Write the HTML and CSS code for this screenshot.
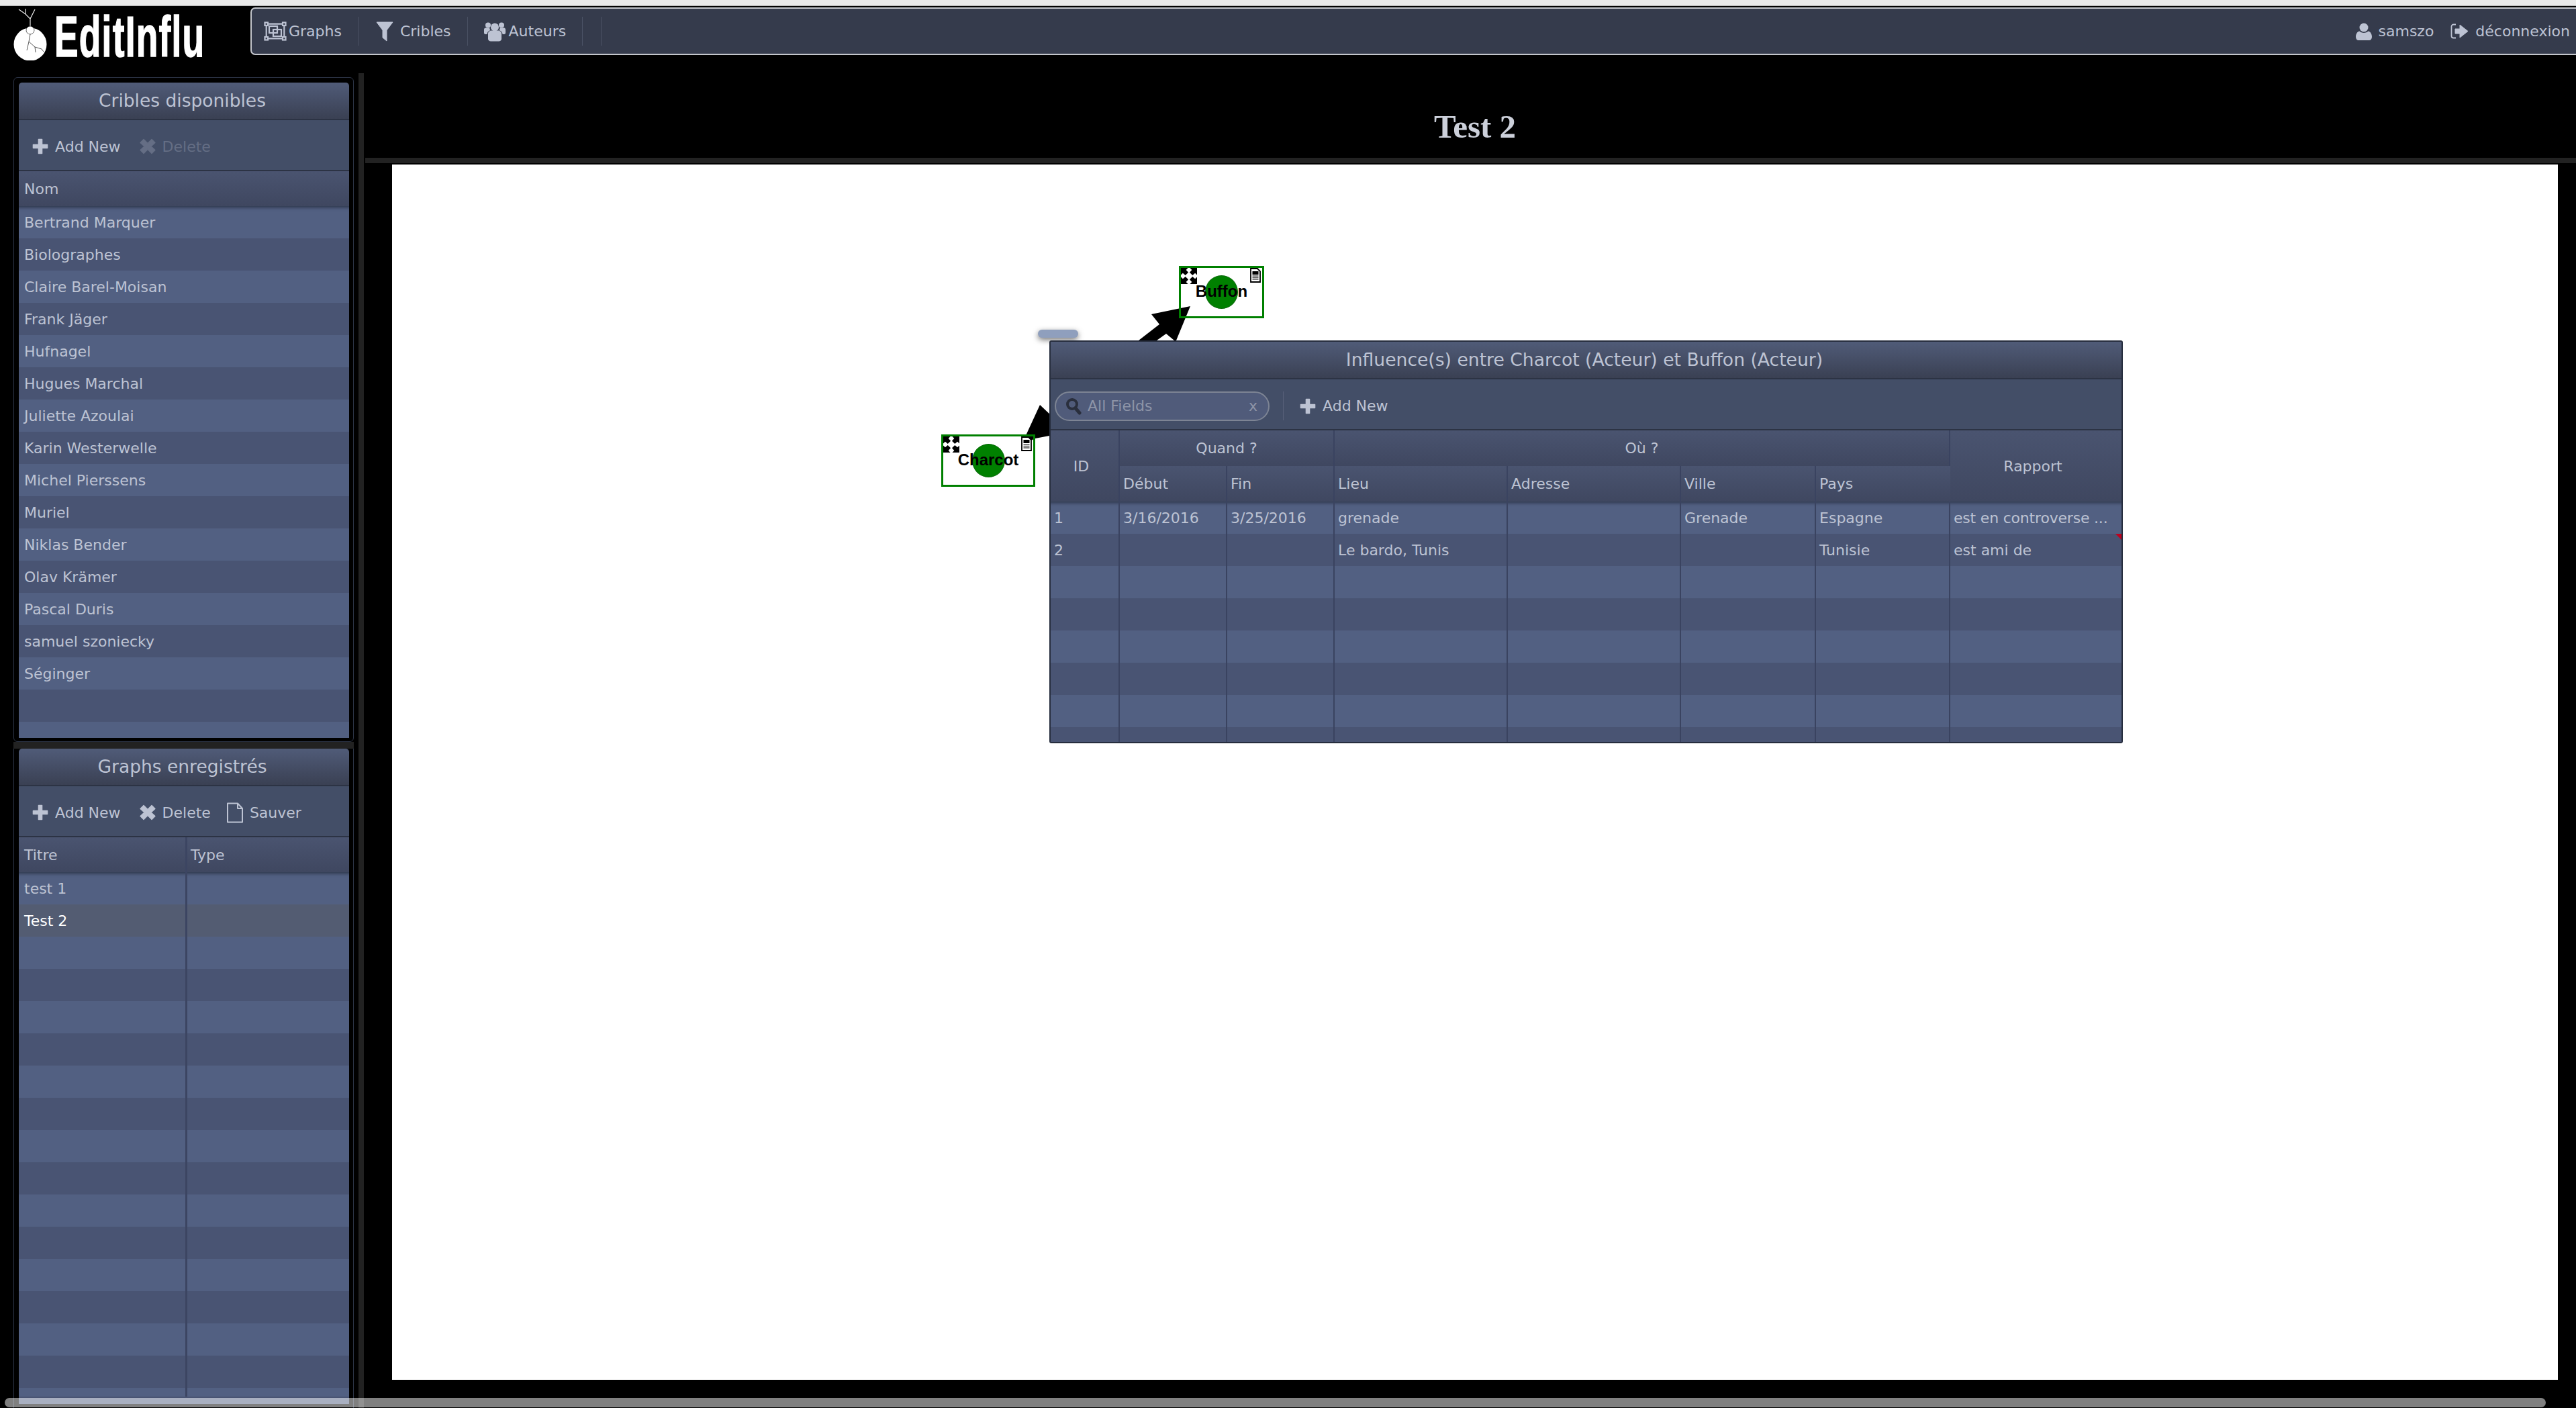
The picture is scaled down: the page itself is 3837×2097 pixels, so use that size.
FILE: index.html
```html
<!DOCTYPE html>
<html lang="fr">
<head>
<meta charset="utf-8">
<title>EditInflu</title>
<link rel="stylesheet" href="styles.css">
</head>
<body>
<svg class="sprite" width="0" height="0" aria-hidden="true">
  <symbol id="i-plus" viewBox="0 0 24 24"><path d="M9.500 1.500h5v8h8v5h-8v8h-5v-8h-8v-5h8z" fill="currentColor" stroke="currentColor" stroke-width="1.600" stroke-linejoin="round"/></symbol>
  <symbol id="i-times" viewBox="0 0 24 24"><path d="M6 1.500l6 6 6-6 5 5-6 5.500 6 5.500-5 5-6-6-6 6-5-5 6-5.500-6-5.500z" fill="currentColor" stroke="currentColor" stroke-width="1.200" stroke-linejoin="round"/></symbol>
  <symbol id="i-file" viewBox="0 0 26 31"><path d="M2 1.500h15l7 7.500v20.500H2zM17 1.500V9h7" fill="none" stroke="currentColor" stroke-width="2" stroke-linejoin="round"/></symbol>
  <symbol id="i-graphs" viewBox="0 0 36 31"><g fill="none" stroke="currentColor" stroke-width="2.200"><rect x="2.500" y="2.500" width="4.500" height="4.500"/><rect x="29" y="2.500" width="4.500" height="4.500"/><rect x="2.500" y="24" width="4.500" height="4.500"/><rect x="29" y="24" width="4.500" height="4.500"/><path d="M7 4.700h22M7 26.300h22M4.700 7v17M31.300 7v17"/><rect x="9" y="8" width="12" height="10"/><rect x="15" y="13" width="12" height="10"/></g></symbol>
  <symbol id="i-filter" viewBox="0 0 26 30"><path d="M1 1h24L16 13v16l-6-5V13z" fill="currentColor" stroke="currentColor" stroke-linejoin="round"/></symbol>
  <symbol id="i-users" viewBox="0 0 32 30"><g fill="currentColor"><circle cx="16" cy="8.500" r="6"/><circle cx="6" cy="5.500" r="4"/><circle cx="26" cy="5.500" r="4"/><path d="M6 18c0-3 3-4.500 5-4.500h10c2 0 5 1.500 5 4.500v8c0 2-2 3.500-4 3.500H10c-2 0-4-1.500-4-3.500z"/><path d="M0 12c0-2 1.500-2.500 3-2.500h5c.5 1.500 1 3 1.500 3.500C6.500 14 4.500 16 4.500 19H2c-1 0-2-.7-2-2zM32 12c0-2-1.500-2.500-3-2.500h-5c-.5 1.500-1 3-1.500 3.500 3 1 5 3 5 6H30c1 0 2-.7 2-2z"/></g></symbol>
  <symbol id="i-user" viewBox="0 0 24 26"><g fill="currentColor"><circle cx="12" cy="7" r="6.500"/><path d="M0 21c0-4 2-8 5.500-8.500 1.500 1.500 4 2.500 6.500 2.500s5-1 6.500-2.500C22 13 24 17 24 21c0 3-2 5-4 5H4c-2 0-4-2-4-5z"/></g></symbol>
  <symbol id="i-logout" viewBox="0 0 27 23"><path d="M8 1.500H4.500a3 3 0 0 0-3 3v14a3 3 0 0 0 3 3H8" fill="none" stroke="currentColor" stroke-width="1.800"/><path d="M7 8h7V2l12 9.500L14 21v-6H7z" fill="currentColor" stroke="currentColor" stroke-linejoin="round"/></symbol>
  <symbol id="i-search" viewBox="0 0 24 26"><circle cx="10" cy="10" r="7" fill="none" stroke="currentColor" stroke-width="4"/><path d="M15 16l6 7" stroke="currentColor" stroke-width="5" stroke-linecap="round"/></symbol>
  <symbol id="i-move" viewBox="0 0 25 25"><path d="M0 0h11L8 3l3.500 4L7 11.500 3 8l-3 3zM25 0H14l3 3-3.500 4L18 11.500 22 8l3 3zM0 25h11l-3-3 3.500-4L7 13.500 3 17l-3-3zM25 25H14l3-3-3.500-4 4.500-4.500 4 3.500 3-3z" fill="#000"/></symbol>
  <symbol id="i-doc" viewBox="0 0 16 22"><path d="M1 1h10l4 4v16H1z" fill="#fff" stroke="#000" stroke-width="1.800"/><rect x="3.500" y="5" width="9" height="5" fill="#000"/><path d="M3.500 12h9M3.500 14.500h9M3.500 17h9" stroke="#555" stroke-width="1.500"/></symbol>
</svg>

<div class="strip"></div>

<header class="head">
  <a class="logo" href="#">
    <svg class="logo-mark" viewBox="0 0 60 77" width="60" height="77">
      <path d="M25 27V15l7-14M25 15L18 8 8 1M18 8V0" fill="none" stroke="#e8e8e8" stroke-width="1.200"/>
      <circle cx="25" cy="53" r="24.500" fill="#fff"/>
      <circle cx="25" cy="32" r="6" fill="#fff" stroke="#000" stroke-width=".6"/>
      <path d="M25 38l-2 11-3 13M23 49l9 8 1 8M32 57l10 3 3 4" fill="none" stroke="#555" stroke-width="1"/>
    </svg>
    <span class="logo-text">EditInflu</span>
  </a>
  <nav class="menubar">
    <a class="menu-item"><svg class="ic-graphs"><use href="#i-graphs"/></svg>Graphs</a>
    <span class="menu-sep"></span>
    <a class="menu-item"><svg class="ic-filter"><use href="#i-filter"/></svg>Cribles</a>
    <span class="menu-sep"></span>
    <a class="menu-item"><svg class="ic-users"><use href="#i-users"/></svg>Auteurs</a>
    <span class="menu-sep"></span>
    <span class="menu-sep menu-sep-b"></span>
    <div class="menu-right">
      <a class="menu-item"><svg class="ic-user"><use href="#i-user"/></svg>samszo</a>
      <a class="menu-item"><svg class="ic-logout"><use href="#i-logout"/></svg>déconnexion</a>
    </div>
  </nav>
</header>

<main class="main">
  <aside class="sidebar">
    <section class="well well-top">
      <div class="panel">
        <h2 class="panel-title">Cribles disponibles</h2>
        <div class="tools">
          <a class="tool"><svg class="ic-btn"><use href="#i-plus"/></svg>Add New</a>
          <a class="tool tool-off"><svg class="ic-btn"><use href="#i-times"/></svg>Delete</a>
        </div>
        <div class="col-head"><span class="cell">Nom</span></div>
        <div class="rows">
          <div class="row"><span class="cell">Bertrand Marquer</span></div>
          <div class="row"><span class="cell">Biolographes</span></div>
          <div class="row"><span class="cell">Claire Barel-Moisan</span></div>
          <div class="row"><span class="cell">Frank Jäger</span></div>
          <div class="row"><span class="cell">Hufnagel</span></div>
          <div class="row"><span class="cell">Hugues Marchal</span></div>
          <div class="row"><span class="cell">Juliette Azoulai</span></div>
          <div class="row"><span class="cell">Karin Westerwelle</span></div>
          <div class="row"><span class="cell">Michel Pierssens</span></div>
          <div class="row"><span class="cell">Muriel</span></div>
          <div class="row"><span class="cell">Niklas Bender</span></div>
          <div class="row"><span class="cell">Olav Krämer</span></div>
          <div class="row"><span class="cell">Pascal Duris</span></div>
          <div class="row"><span class="cell">samuel szoniecky</span></div>
          <div class="row"><span class="cell">Séginger</span></div>
          <div class="row"><span class="cell"></span></div>
          <div class="row"><span class="cell"></span></div>
        </div>
      </div>
    </section>
    <div class="hsplit"></div>
    <section class="well well-bottom">
      <div class="panel">
        <h2 class="panel-title">Graphs enregistrés</h2>
        <div class="tools">
          <a class="tool"><svg class="ic-btn"><use href="#i-plus"/></svg>Add New</a>
          <a class="tool"><svg class="ic-btn"><use href="#i-times"/></svg>Delete</a>
          <a class="tool tool-file"><svg class="ic-file"><use href="#i-file"/></svg>Sauver</a>
        </div>
        <div class="col-head two"><span class="cell">Titre</span><span class="cell">Type</span></div>
        <div class="rows">
          <div class="row two"><span class="cell">test 1</span><span class="cell"></span></div>
          <div class="row two selected"><span class="cell">Test 2</span><span class="cell"></span></div>
          <div class="row two"><span class="cell"></span><span class="cell"></span></div>
          <div class="row two"><span class="cell"></span><span class="cell"></span></div>
          <div class="row two"><span class="cell"></span><span class="cell"></span></div>
          <div class="row two"><span class="cell"></span><span class="cell"></span></div>
          <div class="row two"><span class="cell"></span><span class="cell"></span></div>
          <div class="row two"><span class="cell"></span><span class="cell"></span></div>
          <div class="row two"><span class="cell"></span><span class="cell"></span></div>
          <div class="row two"><span class="cell"></span><span class="cell"></span></div>
          <div class="row two"><span class="cell"></span><span class="cell"></span></div>
          <div class="row two"><span class="cell"></span><span class="cell"></span></div>
          <div class="row two"><span class="cell"></span><span class="cell"></span></div>
          <div class="row two"><span class="cell"></span><span class="cell"></span></div>
          <div class="row two"><span class="cell"></span><span class="cell"></span></div>
          <div class="row two"><span class="cell"></span><span class="cell"></span></div>
          <div class="row two"><span class="cell"></span><span class="cell"></span></div>
        </div>
        <div class="panel-foot"></div>
      </div>
    </section>
  </aside>

  <div class="vsplit"></div>

  <section class="content">
    <h1 class="page-title">Test 2</h1>
    <div class="content-rule"></div>
    <div class="canvas">
      <svg class="links" viewBox="0 0 3226 1810" width="3226" height="1810">
        <polygon points="1189,211 1131,223 1143,238 1112,262 1112,270 1139,270 1139,262 1153,252 1165,262 1168,262"/>
        <polygon points="965,358 1020,410 979,404 958,408 941,416 941,410"/>
      </svg>
      <div class="node node-buffon">
        <svg class="node-move"><use href="#i-move"/></svg>
        <svg class="node-doc"><use href="#i-doc"/></svg>
        <span class="node-dot"></span>
        <span class="node-label">Buffon</span>
      </div>
      <div class="node node-charcot">
        <svg class="node-move"><use href="#i-move"/></svg>
        <svg class="node-doc"><use href="#i-doc"/></svg>
        <span class="node-dot"></span>
        <span class="node-label">Charcot</span>
      </div>
      <div class="grabber"></div>
      <div class="dialog">
        <h2 class="panel-title dialog-title">Influence(s) entre Charcot (Acteur) et Buffon (Acteur)</h2>
        <div class="tools tools-dialog">
          <div class="search">
            <svg class="ic-search"><use href="#i-search"/></svg>
            <span class="search-text">All Fields</span>
            <span class="search-x">x</span>
          </div>
          <span class="tool-sep"></span>
          <a class="tool"><svg class="ic-btn"><use href="#i-plus"/></svg>Add New</a>
        </div>
        <table class="grid">
          <colgroup>
            <col class="c-id"><col class="c-date"><col class="c-date"><col class="c-wide"><col class="c-wide"><col class="c-city"><col class="c-city-b"><col>
          </colgroup>
          <thead>
            <tr>
              <th rowspan="2" class="center tall">ID</th>
              <th colspan="2" class="center">Quand ?</th>
              <th colspan="4" class="center">Où ?</th>
              <th rowspan="2" class="center tall">Rapport</th>
            </tr>
            <tr>
              <th>Début</th><th>Fin</th><th>Lieu</th><th>Adresse</th><th>Ville</th><th>Pays</th>
            </tr>
          </thead>
          <tbody>
            <tr><td>1</td><td>3/16/2016</td><td>3/25/2016</td><td>grenade</td><td></td><td>Grenade</td><td>Espagne</td><td class="tight">est en controverse ...</td></tr>
            <tr><td>2</td><td></td><td></td><td>Le bardo, Tunis</td><td></td><td></td><td>Tunisie</td><td class="dirty">est ami de</td></tr>
            <tr><td></td><td></td><td></td><td></td><td></td><td></td><td></td><td></td></tr>
            <tr><td></td><td></td><td></td><td></td><td></td><td></td><td></td><td></td></tr>
            <tr><td></td><td></td><td></td><td></td><td></td><td></td><td></td><td></td></tr>
            <tr><td></td><td></td><td></td><td></td><td></td><td></td><td></td><td></td></tr>
            <tr><td></td><td></td><td></td><td></td><td></td><td></td><td></td><td></td></tr>
            <tr><td></td><td></td><td></td><td></td><td></td><td></td><td></td><td></td></tr>
          </tbody>
        </table>
      </div>
    </div>
  </section>
</main>

<div class="page-scroll"></div>
</body>
</html>
```

FILE: styles.css
```css
* { box-sizing: border-box; }

html, body {
  margin: 0;
  height: 2097px;
  overflow: hidden;
  background: #000;
}

body {
  position: relative;
  color: #bdc3d3;
  font-family: "DejaVu Sans", Verdana, sans-serif;
  font-size: 22px;
}

.sprite { position: absolute; }

.strip {
  height: 9px;
  background: #e9e9e9;
  border-bottom: 1px solid #b5b5b5;
}

/* header */
.head {
  display: flex;
  height: 100px;
}

.logo {
  display: flex;
  width: 373px;
  height: 73px;
  padding: 4px 0 0 20px;
  color: #fff;
  text-decoration: none;
}

.logo-mark { flex: none; }

.logo-text {
  margin: 0 0 0 1px;
  font-family: "Liberation Sans", Arial, sans-serif;
  font-size: 86px;
  line-height: 82px;
  font-weight: 700;
  letter-spacing: 2px;
  -webkit-text-stroke: 1.500px #fff;
  transform: scaleX(.62);
  transform-origin: left center;
  white-space: nowrap;
}

.menubar {
  flex: 1;
  display: flex;
  align-items: center;
  height: 71px;
  margin-top: 2px;
  padding-left: 17px;
  background: #353b4c;
  border: 2px solid #c4c6cc;
  border-right: 0;
  border-radius: 7px 0 0 7px;
}

.menu-item {
  display: flex;
  align-items: center;
  white-space: nowrap;
}

.menu-sep {
  width: 1px;
  height: 43px;
  margin: 0 24px;
  background: #4a5164;
}

.menu-sep-b { margin-left: 3px; }

.menu-right {
  display: flex;
  gap: 25px;
  margin-left: auto;
  padding-right: 9px;
}

.ic-graphs { width: 36px; height: 31px; margin-right: 2px; }
.ic-filter { width: 26px; height: 30px; margin: 0 10px 0 2px; }
.ic-users { width: 32px; height: 30px; margin-right: 5px; }
.ic-user { width: 24px; height: 26px; margin-right: 10px; }
.ic-logout { width: 27px; height: 23px; margin-right: 10px; }

/* layout */
.main {
  display: flex;
  height: 1988px;
}

.sidebar {
  flex: none;
  display: flex;
  flex-direction: column;
  width: 507px;
  margin-left: 20px;
  padding-top: 6px;
}

.well { border: 1px solid #2c3446; }

.well-top {
  flex: none;
  height: 990px;
  padding: 7px 6px 5px 7px;
  border-radius: 6px;
}

.well-bottom {
  flex: 1;
  min-height: 0;
  padding: 0 6px 6px 7px;
  border-top: 0;
  border-bottom: 0;
}

.hsplit {
  flex: none;
  height: 10px;
  background: #222;
}

.vsplit {
  flex: none;
  width: 8px;
  margin-left: 7px;
  background: #222;
}

/* panels */
.panel {
  display: flex;
  flex-direction: column;
  height: 100%;
  overflow: hidden;
  border-radius: 5px 5px 0 0;
}

.panel-title {
  flex: none;
  height: 56px;
  margin: 0;
  padding: 0 5px 2px 0;
  border-bottom: 2px solid #2c3344;
  background: linear-gradient(#505b78, #3a4053);
  color: #bdc3d3;
  font-size: 26.500px;
  font-weight: 400;
  line-height: 54px;
  text-align: center;
}

.dialog-title { font-size: 26.600px; }

.tools {
  flex: none;
  display: flex;
  align-items: center;
  gap: 28px;
  height: 76px;
  padding: 4px 0 0 20px;
  background: #434e67;
  border-bottom: 2px solid #2c3344;
}

.tool {
  display: flex;
  align-items: center;
  white-space: nowrap;
}

.tool-off { color: #656e85; }
.tool-file { margin-left: -5px; }

.ic-btn { width: 24px; height: 24px; margin-right: 10px; }
.ic-file { width: 26px; height: 31px; margin-right: 9px; }

.col-head {
  flex: none;
  display: flex;
  align-items: center;
  height: 52px;
  padding-left: 8px;
  background: linear-gradient(#4a5470, #3f4760);
}

.rows {
  flex: 1;
  min-height: 0;
  overflow: hidden;
}

.row {
  display: flex;
  align-items: center;
  height: 48px;
  padding-left: 8px;
  background: #526082;
}

.row:nth-child(even) { background: #495473; }

.row:first-child { box-shadow: inset 0 7px 5px -5px rgba(25, 30, 45, .65); }

.row.selected {
  background: #535c72;
  color: #fff;
}

.two {
  display: grid;
  grid-template-columns: 251px 1fr;
  align-items: stretch;
  padding-left: 0;
}

.two .cell {
  display: flex;
  align-items: center;
  padding-left: 8px;
}

.two .cell:first-child { border-right: 3px solid #3c4562; }
.two .cell:last-child { padding-left: 5px; }

.panel-foot {
  flex: none;
  height: 11px;
  background: #526082;
  border-top: 2px solid #495473;
}

/* main area */
.content {
  flex: 1;
  min-width: 0;
  margin-left: 2px;
}

.page-title {
  height: 126px;
  margin: 0 27px 0 40px;
  padding-top: 55px;
  color: #ccd0da;
  font-family: "Liberation Serif", "Times New Roman", serif;
  font-size: 49px;
  line-height: 50px;
  font-weight: 700;
  text-align: center;
}

.content-rule {
  height: 8px;
  background: #222;
}

.canvas {
  position: relative;
  width: 3226px;
  height: 1810px;
  margin: 2px 0 0 40px;
  background: #fff;
}

.links {
  position: absolute;
  left: 0;
  top: 0;
}

.node {
  position: absolute;
  display: flex;
  align-items: center;
  justify-content: center;
  border: 3px solid #008000;
}

.node-buffon { left: 1172px; top: 151px; width: 127px; height: 78px; }
.node-charcot { left: 818px; top: 402px; width: 140px; height: 78px; }

.node-move {
  position: absolute;
  left: 0;
  top: 0;
  width: 24px;
  height: 24px;
}

.node-doc {
  position: absolute;
  right: 2px;
  top: 0;
  width: 16px;
  height: 22px;
}

.node-dot {
  width: 49px;
  height: 50px;
  border-radius: 50%;
  background: #008000;
  border: 1px solid #0a6a0a;
}

.node-label {
  position: absolute;
  left: 0;
  right: 0;
  top: 20px;
  color: #000;
  font-family: "Liberation Sans", Arial, sans-serif;
  font-size: 24px;
  line-height: 30px;
  font-weight: 700;
  text-align: center;
}

.grabber {
  position: absolute;
  left: 962px;
  top: 246px;
  width: 60px;
  height: 12px;
  border-radius: 6px;
  background: #8f9fbd;
  box-shadow: 0 3px 9px rgba(0, 0, 0, .55);
}

.dialog {
  position: absolute;
  left: 979px;
  top: 262px;
  width: 1599px;
  height: 600px;
  overflow: hidden;
  border: 2px solid #262d3d;
  border-radius: 3px;
  background: #495473;
}

.tools-dialog {
  gap: 0;
  height: 76px;
  padding: 5px 0 0 6px;
}

.search {
  display: flex;
  align-items: center;
  width: 320px;
  height: 44px;
  padding: 0 16px 0 14px;
  background: #505b7a;
  border: 2px solid #7d8494;
  border-radius: 22px;
  color: #8e95a8;
}

.ic-search { width: 24px; height: 26px; margin-right: 9px; color: #2a2f3d; }
.search-x { margin-left: auto; }

.tool-sep {
  width: 1px;
  height: 43px;
  margin: 0 24px 0 20px;
  background: #59607a;
}

.grid {
  width: 1596px;
  border-collapse: separate;
  border-spacing: 0;
  table-layout: fixed;
}

.c-id { width: 103px; }
.c-date { width: 160px; }
.c-wide { width: 258px; }
.c-city { width: 201px; }
.c-city-b { width: 200px; }

.grid th {
  height: 53px;
  padding: 0 5px;
  background: linear-gradient(#4a5470, #3f4760);
  border-right: 2px solid #3a4360;
  font-weight: 400;
  text-align: left;
}

.grid th.center { text-align: center; }
.grid th.tall { padding-right: 15px; }

.grid th:last-child,
.grid td:last-child { border-right: 0; }

.grid td {
  height: 48px;
  padding: 0 5px;
  border-right: 2px solid #3a4360;
  background: #526082;
  white-space: nowrap;
  overflow: hidden;
}

.grid tbody tr:nth-child(even) td { background: #495473; }

.grid tbody tr:first-child td { box-shadow: inset 0 7px 5px -5px rgba(25, 30, 45, .65); }

.grid td.tight { letter-spacing: -.2px; }

.dirty { position: relative; }

.dirty::after {
  content: "";
  position: absolute;
  right: 0;
  top: 0;
  border-style: solid;
  border-width: 10px 0 0 10px;
  border-color: #c0001e transparent transparent transparent;
}

.page-scroll {
  position: absolute;
  left: 7px;
  top: 2082px;
  width: 3785px;
  height: 14px;
  border-radius: 7px;
  background: rgba(255, 255, 255, .5);
}
```
